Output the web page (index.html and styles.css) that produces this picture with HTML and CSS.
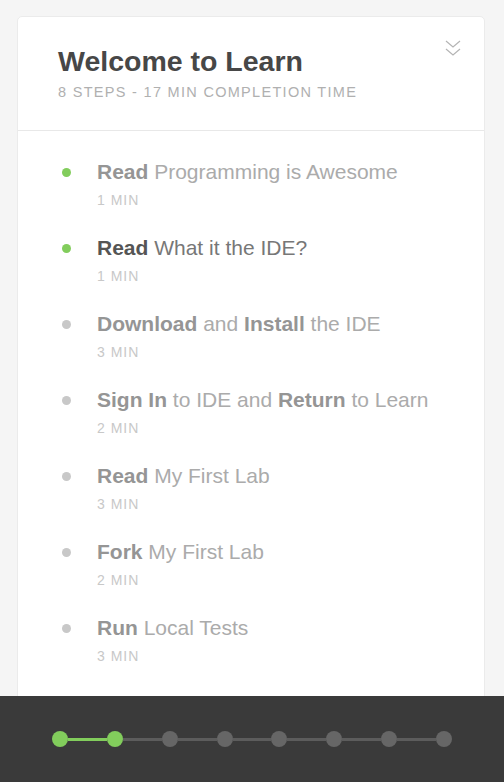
FILE: index.html
```html
<!DOCTYPE html>
<html lang="en">
<head>
  <meta charset="UTF-8">
  <title>Welcome to Learn</title>
  <link rel="stylesheet" href="styles.css">
</head>
<body>

  <div class="card">
    <div class="card-head">
      <h1>Welcome to Learn</h1>
      <p class="sub">8 Steps - 17 min completion time</p>
      <svg class="collapse" width="18" height="18" viewBox="0 0 18 18">
        <path d="M2 2 L9 8 L16 2 M2 10 L9 16 L16 10" fill="none" stroke="#b4b4b4" stroke-width="1.2"/>
      </svg>
    </div>

    <ul class="steps">
      <li class="done"><span class="dot"></span>
        <div><p class="title"><b>Read</b> Programming is Awesome</p><p class="time">1 min</p></div>
      </li>
      <li class="done current"><span class="dot"></span>
        <div><p class="title"><b>Read</b> What it the IDE?</p><p class="time">1 min</p></div>
      </li>
      <li><span class="dot"></span>
        <div><p class="title"><b>Download</b> and <b>Install</b> the IDE</p><p class="time">3 min</p></div>
      </li>
      <li><span class="dot"></span>
        <div><p class="title"><b>Sign In</b> to IDE and <b>Return</b> to Learn</p><p class="time">2 min</p></div>
      </li>
      <li><span class="dot"></span>
        <div><p class="title"><b>Read</b> My First Lab</p><p class="time">3 min</p></div>
      </li>
      <li><span class="dot"></span>
        <div><p class="title"><b>Fork</b> My First Lab</p><p class="time">2 min</p></div>
      </li>
      <li><span class="dot"></span>
        <div><p class="title"><b>Run</b> Local Tests</p><p class="time">3 min</p></div>
      </li>
      <li><span class="dot"></span>
        <div><p class="title"><b>Submit</b> My First Lab</p><p class="time">2 min</p></div>
      </li>
    </ul>
  </div>

  <div class="progress">
    <span class="pdot on"></span><span class="seg on"></span>
    <span class="pdot on"></span><span class="seg"></span>
    <span class="pdot"></span><span class="seg"></span>
    <span class="pdot"></span><span class="seg"></span>
    <span class="pdot"></span><span class="seg"></span>
    <span class="pdot"></span><span class="seg"></span>
    <span class="pdot"></span><span class="seg"></span>
    <span class="pdot"></span>
  </div>

</body>
</html>
```

FILE: styles.css
```css
body {
  margin: 0;
  padding: 16px 19px 0 17px;
  background: #f5f5f5;
  font-family: "Liberation Sans", Arial, sans-serif;
  color: #444;
}
.card {
  background: #fff;
  border: 1px solid #ebebeb;
  border-radius: 5px;
  height: 760px;
}
.card-head {
  position: relative;
  padding: 28px 40px 0 40px;
  height: 85px;
  border-bottom: 1px solid #e8e8e8;
}
h1 {
  margin: 0;
  font-size: 28.5px;
  line-height: 32px;
  font-weight: bold;
  color: #474747;
}
.sub {
  margin: 6px 0 0;
  font-size: 14.5px;
  line-height: 18px;
  text-transform: uppercase;
  color: #b0b0b0;
  letter-spacing: 1.3px;
}
.collapse {
  position: absolute;
  top: 22px;
  right: 22px;
}
.steps {
  list-style: none;
  margin: 0;
  padding: 29px 0 0 44px;
}
.steps li {
  display: flex;
  align-items: flex-start;
  height: 76px;
}
.dot {
  width: 9px;
  height: 9px;
  border-radius: 50%;
  background: #c8c8c8;
  margin-top: 8px;
  margin-right: 26px;
  flex: none;
}
.done .dot {
  background: #82cd5c;
}
.title {
  margin: 0;
  font-size: 21px;
  line-height: 24px;
  color: #ababab;
}
.title b {
  color: #959595;
}
.current .title {
  color: #777;
}
.current .title b {
  color: #555;
}
.time {
  margin: 8px 0 0;
  font-size: 14px;
  line-height: 16px;
  letter-spacing: 1px;
  text-transform: uppercase;
  color: #c8c8c8;
}
.progress {
  position: fixed;
  left: 0;
  right: 0;
  bottom: 0;
  height: 86px;
  background: #3a3a3a;
  display: flex;
  align-items: center;
  padding: 0 52px;
}
.pdot {
  width: 16px;
  height: 16px;
  border-radius: 50%;
  background: #666;
  flex: none;
}
.pdot.on {
  background: #82cd5c;
}
.seg {
  flex: 1;
  height: 3px;
  background: #5c5c5c;
}
.seg.on {
  background: #82cd5c;
}
```
